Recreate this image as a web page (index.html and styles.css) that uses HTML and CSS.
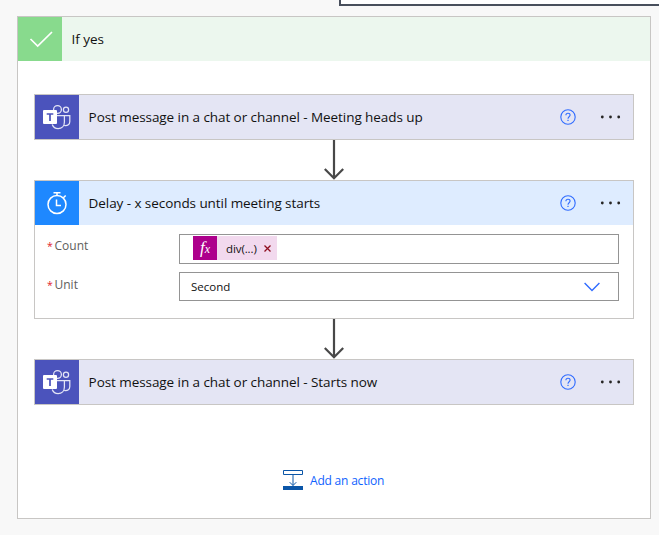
FILE: index.html
```html
<!DOCTYPE html>
<html lang="en">
<head>
<meta charset="utf-8">
<title>Flow designer</title>
<link rel="stylesheet" href="styles.css">
</head>
<body>
<svg class="defs" width="0" height="0">
  <symbol id="teams" viewBox="0 0 44 44">
    <g fill="none" stroke="#e4e5f6" stroke-width="1.25">
      <circle cx="22.5" cy="14.5" r="3.9"/>
      <circle cx="31" cy="14.8" r="2.6"/>
      <path d="M22 20.5h7.4v6.5c0 4-2.6 6.600-6.300 6.600-2.800 0-4.900-1.500-5.900-4.100"/>
      <path d="M29.400 20.500h5.400v6c0 3-2 4.600-5.700 4"/>
    </g>
    <rect x="8" y="15" width="14" height="14" rx="1" fill="#fff"/>
    <path d="M11.700 19h6.600M15 19v7" fill="none" stroke="#4b53bc" stroke-width="1.700"/>
  </symbol>
  <symbol id="help" viewBox="0 0 16 16">
    <g fill="none" stroke="#2f6bff" stroke-width="1.100">
      <circle cx="8" cy="8" r="7.200"/>
      <path d="M5.900 6.200c0-1.300.9-2 2.100-2s2.100.8 2.100 1.900c0 1.700-2.100 1.700-2.100 3.600"/>
    </g>
    <rect x="7.400" y="10.800" width="1.200" height="1.200" fill="#2f6bff"/>
  </symbol>
  <symbol id="dots" viewBox="0 0 22 4">
    <g fill="#252423"><circle cx="2.300" cy="2" r="1.400"/><circle cx="10.500" cy="2" r="1.400"/><circle cx="18.700" cy="2" r="1.400"/></g>
  </symbol>
  <symbol id="arrow" viewBox="0 0 22 40">
    <path d="M11 0v38M1.800 29l9.200 9.200 9.200-9.200" fill="none" stroke="#484848" stroke-width="2.200"/>
  </symbol>
</svg>
<div class="upper-panel"></div>
<main class="branch">
  <header class="bar yes">
    <span class="tile"><svg width="44" height="44" viewBox="0 0 44 44"><path d="M12.500 22l7.200 7 14.300-14" fill="none" stroke="#fff" stroke-width="1.700"/></svg></span>
    <span class="title">If yes</span>
  </header>
  <div class="steps">
    <section class="card teams">
      <header class="bar">
        <span class="tile"><svg width="44" height="44"><use href="#teams"/></svg></span>
        <span class="title">Post message in a chat or channel - Meeting heads up</span>
        <svg class="help" width="16" height="16"><use href="#help"/></svg>
        <svg class="dots" width="22" height="4"><use href="#dots"/></svg>
      </header>
    </section>
    <svg class="arrow" width="22" height="40"><use href="#arrow"/></svg>
    <section class="card delay">
      <header class="bar">
        <span class="tile"><svg width="44" height="44" viewBox="0 0 44 44"><g fill="none" stroke="#fff" stroke-width="1.500"><circle cx="22" cy="23.500" r="9"/><path d="M18.500 11.800h7M22 12v2.500M28.400 16.800l2.300-2.300"/><path d="M21.500 18.500v6h4.500"/></g></svg></span>
        <span class="title">Delay - x seconds until meeting starts</span>
        <svg class="help" width="16" height="16"><use href="#help"/></svg>
        <svg class="dots" width="22" height="4"><use href="#dots"/></svg>
      </header>
      <div class="fields">
        <div class="field">
          <label><b>*</b>Count</label>
          <div class="input count"><span class="chip"><i>f<small>x</small></i><span class="expr">div(...)</span><svg width="7" height="7" viewBox="0 0 7 7"><path d="M.5.5l6 6M6.500.5l-6 6" stroke="#8f0f20" stroke-width="1.300"/></svg></span></div>
        </div>
        <div class="field">
          <label class="lower"><b>*</b>Unit</label>
          <div class="input unit"><span>Second</span><svg width="16" height="10" viewBox="0 0 16 10"><path d="M.6 1l7.400 7.400L15.400 1" fill="none" stroke="#2f6bff" stroke-width="1.400"/></svg></div>
        </div>
      </div>
    </section>
    <svg class="arrow" width="22" height="40"><use href="#arrow"/></svg>
    <section class="card teams">
      <header class="bar">
        <span class="tile"><svg width="44" height="44"><use href="#teams"/></svg></span>
        <span class="title">Post message in a chat or channel - Starts now</span>
        <svg class="help" width="16" height="16"><use href="#help"/></svg>
        <svg class="dots" width="22" height="4"><use href="#dots"/></svg>
      </header>
    </section>
  </div>
  <div class="add">
    <svg width="20" height="20" viewBox="0 0 20 20"><path d="M.5.5h19v4H.5zM10 5v10.500M6.700 12.200l3.300 3.300 3.300-3.300" fill="none" stroke="#0b56a8"/><rect y="16" width="20" height="4" fill="#0b56a8"/></svg>
    <span>Add an action</span>
  </div>
</main>
</body>
</html>
```
FILE: styles.css
```css
* { box-sizing: border-box; }
body { margin: 0; width: 659px; height: 535px; overflow: hidden; background: #f8f8f8; font-family: "Open Sans", "Noto Sans", sans-serif; font-size: 13.5px; color: #111; }
svg { display: block; flex: none; }
.defs { position: absolute; }
.upper-panel { height: 6px; margin-left: 339px; background: #fff; border-left: 2px solid #484f5c; border-bottom: 2px solid #484f5c; }
.branch { width: 634px; height: 503px; margin: 10px 0 0 17px; background: #fff; border: 1px solid #c8c6c4; }
.bar { display: flex; align-items: center; height: 44px; padding-right: 11px; }
.tile { width: 44px; height: 44px; margin-right: 9.6px; flex: none; }
.title { flex: 1; white-space: nowrap; letter-spacing: -0.07px; }
.yes { background: #ecf7ee; }
.yes .tile { background: #88da8d; }
.steps { display: flex; flex-direction: column; align-items: center; padding: 33px 16px 0; }
.card { width: 600px; border: 1px solid #c8c6c4; }
.teams .bar { background: #e4e5f4; }
.teams .tile { background: #4b53bc; }
.delay { height: 139px; }
.delay .bar { background: #deecff; }
.delay .tile { background: #1e88ff; }
.help { margin-right: 24px; }
.fields { display: flex; flex-direction: column; gap: 8px; padding: 9px 14px 0 12px; }
.field { display: flex; }
label { width: 132px; padding-top: 3px; font-size: 12px; line-height: 17px; color: #605e5c; }
label.lower { padding-top: 4px; }
label b { display: inline-block; width: 7.5px; font-size: 10.5px; font-weight: 400; color: #e0202c; }
.input { display: flex; flex: 1; border: 1px solid #949494; font-size: 11.5px; }
.count { height: 30px; padding: 1px 13px; }
.unit { height: 29px; align-items: center; justify-content: space-between; padding: 0 18px 0 11px; }
.chip { display: flex; align-items: center; width: 84px; height: 24px; background: #f2d9ee; }
.chip i { width: 24px; height: 24px; margin-right: 9px; background: #ad008c; color: #fff; font: italic 17px/23px "Liberation Serif", serif; text-align: center; }
.chip small { font-size: 12px; }
.expr { width: 38px; white-space: nowrap; letter-spacing: -0.1px; }
.add { display: flex; gap: 7px; margin: 65px 0 0 265px; font-size: 12px; line-height: 22px; height: 20px; letter-spacing: -0.2px; color: #0f62fe; }
```
